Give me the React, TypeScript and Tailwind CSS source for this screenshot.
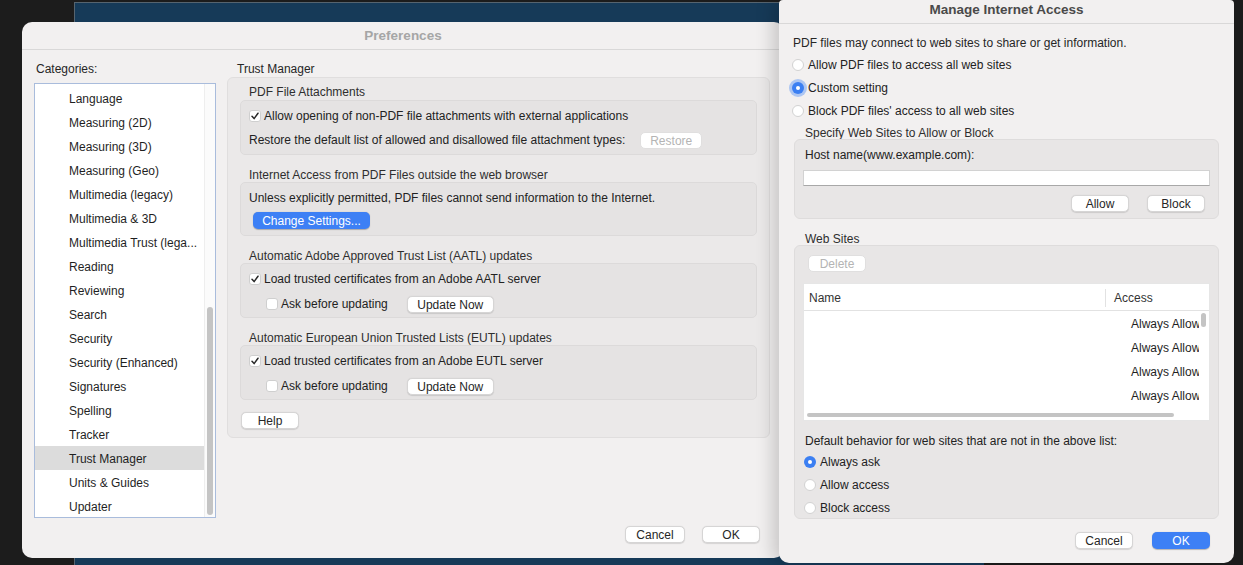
import React from "react";

const CATEGORIES = [
  "Language",
  "Measuring (2D)",
  "Measuring (3D)",
  "Measuring (Geo)",
  "Multimedia (legacy)",
  "Multimedia & 3D",
  "Multimedia Trust (lega...",
  "Reading",
  "Reviewing",
  "Search",
  "Security",
  "Security (Enhanced)",
  "Signatures",
  "Spelling",
  "Tracker",
  "Trust Manager",
  "Units & Guides",
  "Updater",
];

const FONT = "font-['Liberation_Sans',Arial,sans-serif]";

// Plain mac style push button
const Btn = ({
  children,
  className = "",
  disabled = false,
  primary = false,
}: {
  children: React.ReactNode;
  className?: string;
  disabled?: boolean;
  primary?: boolean;
}) => (
  <div
    className={
      "h-[17px] shrink-0 rounded-[5px] flex items-center justify-center text-[12px] leading-none pt-[1px] " +
      (primary
        ? "bg-[#3d80f5] text-white shadow-[0_0.5px_1px_rgba(0,0,0,0.25)] "
        : "bg-white border border-[#d6d5d5] shadow-[0_0.5px_1px_rgba(0,0,0,0.12)] ") +
      (disabled ? "bg-[#f3f2f2] text-[#b4b4b4] border-[#e0dfdf] shadow-none " : primary ? "" : "text-[#262626] ") +
      className
    }
  >
    {children}
  </div>
);

const Checkbox = ({ checked = false }: { checked?: boolean }) => (
  <div className="w-[12px] h-[12px] rounded-[3px] bg-white border border-[#cfcfcf] flex items-center justify-center shrink-0">
    {checked && (
      <svg width="10" height="10" viewBox="0 0 10 10">
        <path d="M2 5.3 L4.1 7.6 L8 2.2" fill="none" stroke="#2a2a2a" strokeWidth="1.5" strokeLinecap="round" strokeLinejoin="round" />
      </svg>
    )}
  </div>
);

const Radio = ({ checked = false, focus = false }: { checked?: boolean; focus?: boolean }) => (
  <div
    className={
      "w-[12px] h-[12px] rounded-full flex items-center justify-center shrink-0 " +
      (checked ? "bg-[#3b7ff2] " : "bg-white border border-[#d2d2d2] ") +
      (focus ? "shadow-[0_0_0_3px_rgba(88,146,245,0.45)]" : "")
    }
  >
    {checked && <div className="w-[4px] h-[4px] rounded-full bg-white" />}
  </div>
);

const GroupTitle = ({ children, className = "" }: { children: React.ReactNode; className?: string }) => (
  <div className={"h-[14px] leading-[16px] pl-[9px] text-[#2e2e2e] " + className}>{children}</div>
);

const UpdateGroup = ({ title, label }: { title: string; label: string }) => (
  <>
    <GroupTitle className="mt-[12px] mb-[1px]">{title}</GroupTitle>
    <div className="h-[55px] shrink-0 rounded-[5px] bg-[#e5e3e3] border border-[#dcdada] px-[8px] flex flex-col">
      <div className="h-[28px] flex items-center gap-[3px] pt-[1px]">
        <Checkbox checked />
        <span>{label}</span>
      </div>
      <div className="mt-[3px] flex items-center pl-[17px]">
        <Checkbox />
        <span className="ml-[3px]">Ask before updating</span>
        <Btn className="ml-[19px] w-[87px]">Update Now</Btn>
      </div>
    </div>
  </>
);

const Preferences = () => (
  <div className="absolute left-[22px] top-[22px] w-[762px] h-[536px] rounded-[10px] bg-[#f2f0f0] overflow-hidden flex flex-col">
    <div className="h-[28px] shrink-0 border-b border-[#d9d8d8] flex items-center justify-center text-[13.5px] font-bold text-[#a6a6a6] pt-[2px]">
      Preferences
    </div>
    <div className="flex flex-1 pl-[12px] pt-[12px]">
      {/* Categories column */}
      <div className="w-[182px] flex flex-col">
        <div className="h-[14px] leading-[15px] pl-[2px] text-[#262626]">Categories:</div>
        <div className="mt-[7px] h-[435px] bg-white border border-[#a9bcdc] flex">
          <div className="flex-1 pt-[2px]">
            {CATEGORIES.map((c) => (
              <div
                key={c}
                className={
                  "h-[24px] leading-[26px] pl-[34px] text-[#1f1f1f] " +
                  (c === "Trust Manager" ? "bg-[#dcdcdc]" : "")
                }
              >
                {c}
              </div>
            ))}
          </div>
          <div className="w-[11px] bg-[#fbfbfb] border-l border-[#eeeeee] flex flex-col justify-end pb-[2px] items-center">
            <div className="w-[6px] h-[208px] rounded-full bg-[#c4c4c4]" />
          </div>
        </div>
      </div>

      {/* Trust Manager panel */}
      <div className="ml-[11px] w-[543px] flex flex-col">
        <div className="h-[14px] leading-[15px] pl-[10px] text-[#262626]">Trust Manager</div>
        <div className="mt-[1px] h-[361px] shrink-0 rounded-[6px] bg-[#ebe9e9] border border-[#e0dede] px-[12px] pt-[6px] flex flex-col">
          <GroupTitle className="mb-[2px]">PDF File Attachments</GroupTitle>
          <div className="h-[55px] shrink-0 rounded-[5px] bg-[#e5e3e3] border border-[#dcdada] px-[8px] flex flex-col">
            <div className="h-[28px] flex items-center gap-[3px] pt-[1px]">
              <Checkbox checked />
              <span>Allow opening of non-PDF file attachments with external applications</span>
            </div>
            <div className="mt-[2px] flex items-center">
              <span>Restore the default list of allowed and disallowed file attachment types:</span>
              <Btn disabled className="ml-[15px] w-[62px]">Restore</Btn>
            </div>
          </div>

          <GroupTitle className="mt-[12px] mb-[1px]">Internet Access from PDF Files outside the web browser</GroupTitle>
          <div className="h-[54px] shrink-0 rounded-[5px] bg-[#e5e3e3] border border-[#dcdada] px-[8px] flex flex-col">
            <div className="h-[28px] leading-[28px] pt-[1px]">
              Unless explicitly permitted, PDF files cannot send information to the Internet.
            </div>
            <Btn primary className="mt-[1px] ml-[4px] w-[117px] bg-[#3b78ee]">Change Settings...</Btn>
          </div>

          <UpdateGroup
            title="Automatic Adobe Approved Trust List (AATL) updates"
            label="Load trusted certificates from an Adobe AATL server"
          />
          <UpdateGroup
            title="Automatic European Union Trusted Lists (EUTL) updates"
            label="Load trusted certificates from an Adobe EUTL server"
          />

          <Btn className="mt-[12px] ml-[1px] w-[58px]">Help</Btn>
        </div>
        <div className="mt-[88px] flex justify-end gap-[17px] pr-[10px]">
          <Btn className="w-[60px]">Cancel</Btn>
          <Btn className="w-[58px]">OK</Btn>
        </div>
      </div>
    </div>
  </div>
);

const ManageAccess = () => (
  <div className="absolute left-[779px] top-0 w-[455px] h-[563px] rounded-b-[10px] rounded-t-[4px] bg-[#f2f0f0] shadow-[-6px_0_18px_rgba(0,0,0,0.18)] flex flex-col">
    <div className="h-[24px] shrink-0 border-b border-[#d9d8d8] flex items-center justify-center text-[13.5px] font-bold text-[#4a4a4a] pb-[3px]">
      Manage Internet Access
    </div>
    <div className="flex flex-col pl-[14px] pr-[15px]">
      <div className="mt-[12px] h-[14px] leading-[14px] text-[#262626]">
        PDF files may connect to web sites to share or get information.
      </div>
      <div className="mt-[3px] flex flex-col">
        {[
          ["Allow PDF files to access all web sites", false],
          ["Custom setting", true],
          ["Block PDF files' access to all web sites", false],
        ].map(([t, on]) => (
          <div key={t as string} className="h-[23px] flex items-center gap-[4px] -ml-[1px]">
            <Radio checked={on as boolean} focus={on as boolean} />
            <span>{t}</span>
          </div>
        ))}
      </div>

      <div className="mt-[3px] h-[14px] leading-[16px] pl-[12px] text-[#2e2e2e]">Specify Web Sites to Allow or Block</div>
      <div className="ml-[1px] h-[80px] rounded-[6px] bg-[#e8e6e6] border border-[#dedcdc] px-[8px] flex flex-col">
        <div className="mt-[8px] h-[14px] leading-[14px] pl-[2px]">Host name(www.example.com):</div>
        <div className="mt-[8px] h-[16px] shrink-0 bg-white border border-[#d2d2d2] border-b-[#a8a8a8]" />
        <div className="mt-[9px] flex justify-end gap-[18px] pr-[5px]">
          <Btn className="w-[58px]">Allow</Btn>
          <Btn className="w-[58px]">Block</Btn>
        </div>
      </div>

      <div className="mt-[12px] h-[14px] leading-[16px] pl-[12px] text-[#2e2e2e]">Web Sites</div>
      <div className="ml-[1px] h-[274px] rounded-[6px] bg-[#e8e6e6] border border-[#dedcdc] px-[8px] flex flex-col">
        <Btn disabled className="mt-[9px] ml-[5px] w-[58px]">Delete</Btn>
        <div className="mt-[11px] h-[138px] shrink-0 bg-white border border-[#e6e6e6] flex flex-col overflow-hidden">
          <div className="h-[27px] shrink-0 flex items-center border-b border-[#e2e2e2] text-[#333333] pt-[2px]">
            <div className="w-[301px] pl-[5px]">Name</div>
            <div className="w-px h-[18px] bg-[#e2e2e2]" />
            <div className="pl-[8px]">Access</div>
          </div>
          <div className="flex flex-1 min-h-0">
            <div className="w-[395px] overflow-hidden flex flex-col">
              {[0, 1, 2, 3].map((i) => (
                <div key={i} className="h-[24px] shrink-0 leading-[26px] whitespace-nowrap pl-[327px] text-[#1f1f1f]">
                  Always Allow
                </div>
              ))}
            </div>
            <div className="flex-1 pt-[2px] pl-[2px]">
              <div className="w-[5px] h-[14px] rounded-full bg-[#c4c4c4]" />
            </div>
          </div>
          <div className="h-[7px] shrink-0 flex items-start pl-[3px]">
            <div className="w-[367px] h-[4px] rounded-full bg-[#c4c4c4]" />
          </div>
        </div>
        <div className="mt-[12px] h-[14px] leading-[16px] pl-[2px]">
          Default behavior for web sites that are not in the above list:
        </div>
        <div className="mt-[3px] flex flex-col">
          {[
            ["Always ask", true],
            ["Allow access", false],
            ["Block access", false],
          ].map(([t, on]) => (
            <div key={t as string} className="h-[23px] flex items-center gap-[4px] pl-[1px]">
              <Radio checked={on as boolean} />
              <span>{t}</span>
            </div>
          ))}
        </div>
      </div>
      <div className="mt-[13px] flex justify-end gap-[19px] pr-[9px]">
        <Btn className="w-[58px]">Cancel</Btn>
        <Btn primary className="w-[58px]">OK</Btn>
      </div>
    </div>
  </div>
);

export default function App() {
  return (
    <div className={"relative w-[1243px] h-[565px] overflow-hidden bg-[#1c1c1c] text-[12px] text-[#222222] " + FONT}>
      {/* window behind the dialogs */}
      <div className="absolute left-[74px] top-[2px] w-[910px] h-[580px] bg-[#163a58] border-t border-l border-[#56646f]" />
      <Preferences />
      <ManageAccess />
    </div>
  );
}
